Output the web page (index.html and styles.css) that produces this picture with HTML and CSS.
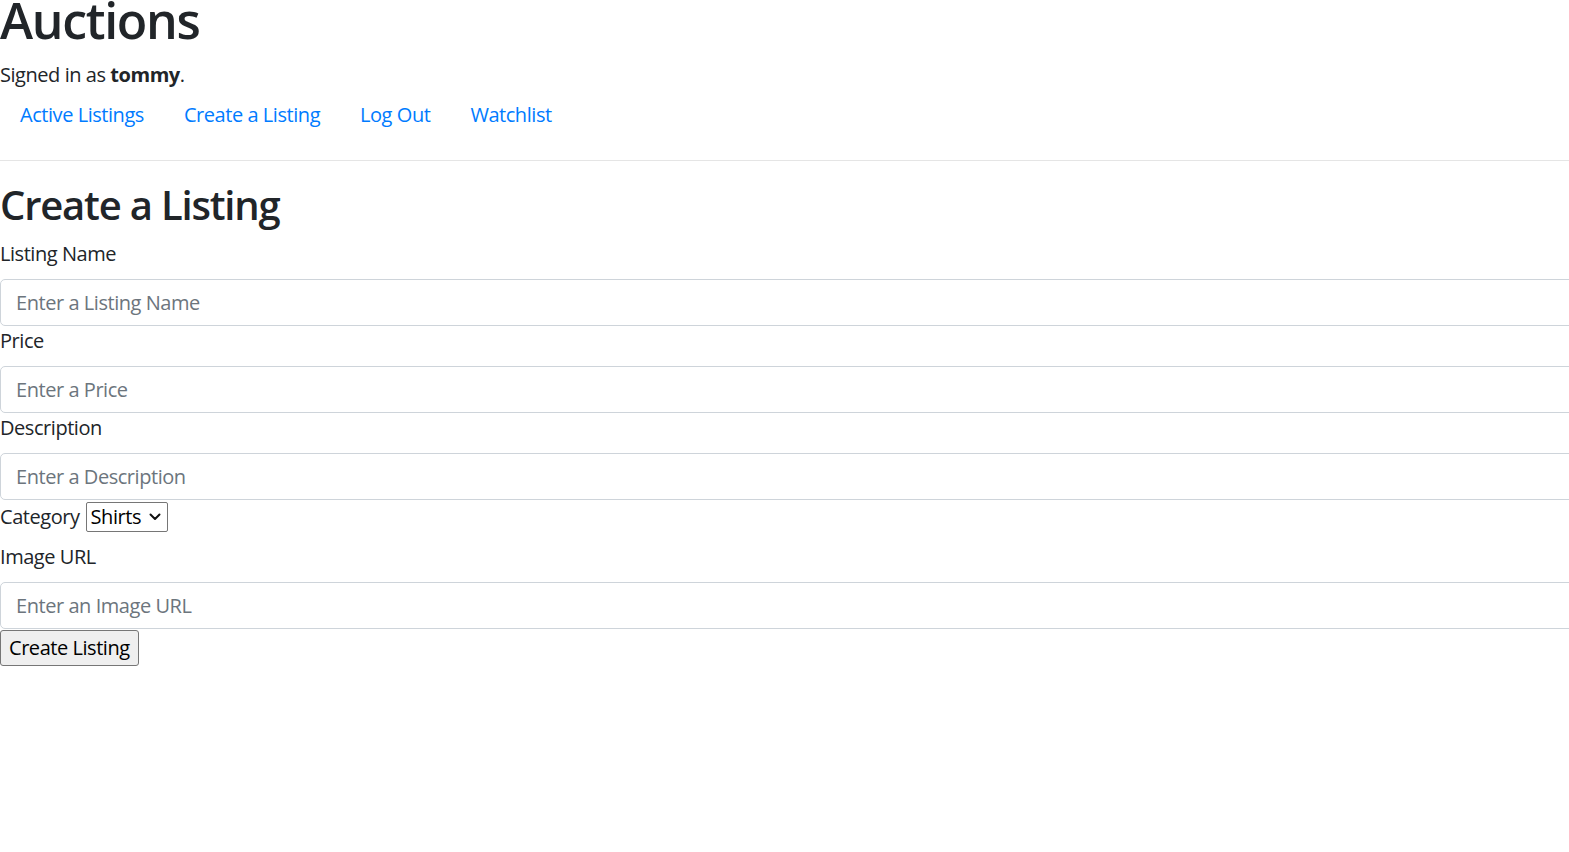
FILE: index.html
```html
<!DOCTYPE html>
<html lang="en">
<head>
  <meta charset="UTF-8">
  <meta name="viewport" content="width=device-width, initial-scale=1.0">
  <title>Auctions</title>
  <link rel="stylesheet" href="styles.css">
</head>
<body>

<h1 class="site-title">Auctions</h1>

<div class="signed-in">Signed in as <strong>tommy</strong>.</div>

<ul class="nav">
  <li class="nav-item"><a class="nav-link" href="#">Active Listings</a></li>
  <li class="nav-item"><a class="nav-link" href="#">Create a Listing</a></li>
  <li class="nav-item"><a class="nav-link" href="#">Log Out</a></li>
  <li class="nav-item"><a class="nav-link" href="#">Watchlist</a></li>
</ul>

<hr class="divider">

<h2 class="page-title">Create a Listing</h2>

<form class="listing-form" action="#">
  <label class="form-label" for="name">Listing Name</label>
  <input class="form-control" id="name" type="text" placeholder="Enter a Listing Name">

  <label class="form-label" for="price">Price</label>
  <input class="form-control" id="price" type="text" placeholder="Enter a Price">

  <label class="form-label" for="description">Description</label>
  <input class="form-control" id="description" type="text" placeholder="Enter a Description">

  <div class="category-row">
    <label class="inline-label" for="category">Category</label>
    <span class="select-wrap">
      <select class="category-select" id="category">
        <option>Shirts</option>
        <option>Shoes</option>
        <option>Hats</option>
      </select>
      <!-- chevron drawn over the select -->
      <svg class="select-arrow" width="12" height="8" viewBox="0 0 12 8">
        <path d="M1.5 1.5 L6 6 L10.5 1.5" fill="none" stroke="#111" stroke-width="2" stroke-linecap="round" stroke-linejoin="round"/>
      </svg>
    </span>
  </div>

  <label class="form-label" for="image">Image URL</label>
  <input class="form-control" id="image" type="text" placeholder="Enter an Image URL">

  <div class="actions">
    <button class="submit-btn" type="submit">Create Listing</button>
  </div>
</form>

</body>
</html>
```

FILE: styles.css
```css
html {
  overflow-x: hidden;
}

body {
  margin: 0;
  font-family: "Open Sans", "Noto Sans", sans-serif;
  font-size: 20px;
  line-height: 30px;
  letter-spacing: -0.45px;
  color: #212529;
  background: #fff;
  overflow-x: hidden;
}

.site-title {
  margin: -10px 0 10px 0;
  font-size: 50px;
  line-height: 60px;
  font-weight: 600;
  letter-spacing: -1.3px;
}

.signed-in strong {
  font-weight: 700;
}

.nav {
  display: flex;
  margin: 0;
  padding: 0;
  list-style: none;
}

.nav-link {
  display: block;
  padding: 10px 20px;
  color: #007bff;
  text-decoration: none;
}

.divider {
  margin: 20px 0;
  border: 0;
  border-top: 1px solid rgba(0, 0, 0, 0.1);
}

.page-title {
  margin: 0 0 10px 0;
  font-size: 40px;
  line-height: 48px;
  font-weight: 600;
  letter-spacing: -1.2px;
}

.form-label {
  display: inline-block;
  margin-bottom: 10px;
}

.form-control {
  display: block;
  box-sizing: border-box;
  width: calc(100% + 40px);
  height: 47px;
  padding: 7px 15px;
  font-family: inherit;
  font-size: 20px;
  line-height: 30px;
  letter-spacing: -0.45px;
  color: #495057;
  background: #fff;
  border: 1px solid #ced4da;
  border-radius: 5px;
}

.form-control::placeholder {
  color: #6c757d;
  opacity: 1;
}

.category-row {
  display: flex;
  align-items: center;
  height: 31px;
  margin-top: 1px;
  margin-bottom: 10px;
}

.inline-label {
  line-height: 30px;
}

.select-wrap {
  position: relative;
  display: inline-block;
  margin-left: 6px;
  height: 30px;
}

.category-select {
  -webkit-appearance: none;
  appearance: none;
  box-sizing: border-box;
  width: 82px;
  height: 30px;
  margin: 0;
  padding: 0 0 0 4px;
  font-family: inherit;
  font-size: 20px;
  line-height: 28px;
  letter-spacing: -0.45px;
  color: #000;
  border: 1px solid #767676;
  border-radius: 2px;
  background: #fff;
}

.select-arrow {
  position: absolute;
  right: 7px;
  top: 50%;
  margin-top: -4px;
  pointer-events: none;
}

.actions {
  padding-top: 1px;
}

.submit-btn {
  height: 36px;
  padding: 1px 8px;
  font-family: inherit;
  font-size: 20px;
  line-height: 30px;
  letter-spacing: -0.45px;
  color: #000;
  background: #efefef;
  border: 1px solid #767676;
  border-radius: 3px;
}
```
